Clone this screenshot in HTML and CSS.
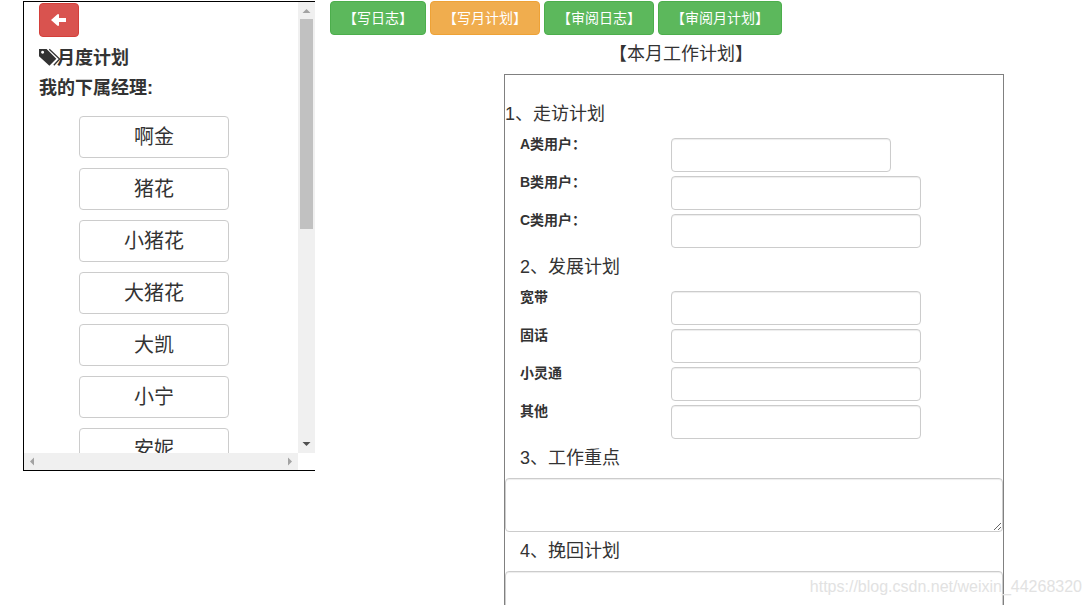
FILE: index.html
```html
<!DOCTYPE html>
<html lang="zh-CN">
<head>
<meta charset="utf-8">
<title>月度计划</title>
<link rel="stylesheet" href="styles.css">
</head>
<body>
<div class="page">
  <aside class="sidebar">
    <div class="sidebar-view">
      <button class="btn btn-danger" type="button" aria-label="返回">
        <svg width="14" height="14" viewBox="0 0 14 14"><path d="M-1 7 5.500 1.200H7V5.100h7v3.800H7v3.900H5.500z" fill="#fff"/></svg>
      </button>
      <h4 class="side-title">
        <svg class="tags" width="24" height="20" viewBox="0 0 24 20"><path fill="#333" fill-rule="evenodd" d="M0 1h7.600l9.700 9.700-6.900 7.100L0 8.200zM3.600 2.700a1.500 1.500 0 1 0 .01 0z"/><path d="M10.300 1.300 20.600 11l-5.800 6.300" fill="none" stroke="#333" stroke-width="1.300"/></svg><span>月度计划</span>
      </h4>
      <h4 class="side-title">我的下属经理:</h4>
      <div class="people">
        <button class="person" type="button">啊金</button>
        <button class="person" type="button">猪花</button>
        <button class="person" type="button">小猪花</button>
        <button class="person" type="button">大猪花</button>
        <button class="person" type="button">大凯</button>
        <button class="person" type="button">小宁</button>
        <button class="person" type="button">安妮</button>
      </div>
    </div>
    <div class="bar bar-y">
      <svg class="arrow" width="17" height="17" viewBox="0 0 17 17"><path d="M4.500 11h8L8.500 7z" fill="#a3a3a3"/></svg>
      <div class="track"><div class="thumb"></div></div>
      <svg class="arrow" width="17" height="17" viewBox="0 0 17 17"><path d="M4.500 6h8l-4 4z" fill="#505050"/></svg>
    </div>
    <div class="bar bar-x">
      <svg class="arrow" width="17" height="17" viewBox="0 0 17 17"><path d="M10 4.500v8l-4-4z" fill="#a3a3a3"/></svg>
      <svg class="arrow" width="17" height="17" viewBox="0 0 17 17"><path d="M7 4.500v8l4-4z" fill="#a3a3a3"/></svg>
    </div>
  </aside>

  <main class="main">
    <nav class="toolbar">
      <button class="btn btn-success" type="button">【写日志】</button>
      <button class="btn btn-warning" type="button">【写月计划】</button>
      <button class="btn btn-success" type="button">【审阅日志】</button>
      <button class="btn btn-success" type="button">【审阅月计划】</button>
    </nav>
    <h4 class="title">【本月工作计划】</h4>
    <form class="plan">
      <h4 class="heading heading-flush">1、走访计划</h4>
      <div class="row"><label for="a">A类用户：</label><input class="field field-short" id="a" type="text"></div>
      <div class="row"><label for="b">B类用户：</label><input class="field" id="b" type="text"></div>
      <div class="row"><label for="c">C类用户：</label><input class="field" id="c" type="text"></div>
      <h4 class="heading">2、发展计划</h4>
      <div class="row"><label for="d">宽带</label><input class="field" id="d" type="text"></div>
      <div class="row"><label for="e">固话</label><input class="field" id="e" type="text"></div>
      <div class="row"><label for="f">小灵通</label><input class="field" id="f" type="text"></div>
      <div class="row"><label for="g">其他</label><input class="field" id="g" type="text"></div>
      <h4 class="heading"><label for="focus">3、工作重点</label></h4>
      <textarea class="area" id="focus" rows="2"></textarea>
      <h4 class="heading"><label for="recover">4、挽回计划</label></h4>
      <textarea class="area" id="recover" rows="2"></textarea>
    </form>
  </main>
  <div class="watermark">https://blog.csdn.net/weixin_44268320</div>
</div>
</body>
</html>
```
FILE: styles.css
```css
* { box-sizing: border-box; }

body {
  margin: 0;
  background: #fff;
  color: #333;
  font: 14px/20px "Liberation Sans", "Noto Sans CJK SC", sans-serif;
}

button, input, textarea { font: inherit; color: inherit; }

h4 { margin: 0; font-size: 18px; line-height: 19px; font-weight: 400; }

.page {
  position: relative;
  display: flex;
  align-items: flex-start;
  height: 100vh;
  padding: 1px 0 0 23px;
  overflow: hidden;
}

/* Sidebar */
.sidebar {
  flex: 0 0 292px;
  display: grid;
  grid-template-columns: 1fr 17px;
  grid-template-rows: 451px 17px;
  border: 1px solid #000;
  border-right: 0;
}

.sidebar-view { overflow: hidden; padding: 1px 15px 0; }

.side-title {
  display: flex;
  align-items: center;
  height: 20px;
  margin-bottom: 10px;
  font-weight: 700;
}

.tags { flex: none; margin-right: -6px; }

.people {
  display: flex;
  flex-direction: column;
  gap: 10px;
  padding: 8px 0 0 40px;
}

.person {
  flex: none;
  width: 150px;
  height: 42px;
  padding: 0;
  border: 1px solid #ccc;
  border-radius: 4px;
  background: #fff;
  font-size: 20px;
  line-height: 40px;
}

.bar { display: flex; background: #f0f0f0; }
.bar-y { flex-direction: column; }
.bar-x { justify-content: space-between; }
.arrow { flex: none; }
.track { flex: 1; padding: 0 2px; }
.thumb { height: 210px; background: #c1c1c1; }

/* Buttons */
.btn {
  display: block;
  height: 34px;
  padding: 0 12px;
  border: 1px solid;
  border-radius: 4px;
  color: #fff;
  white-space: nowrap;
}

.btn svg { display: block; overflow: visible; }
.btn-danger { margin-bottom: 11px; background: #d9534f; border-color: #d43f3a; }
.btn-success { background: #5cb85c; border-color: #4cae4c; }
.btn-warning { background: #f0ad4e; border-color: #eea236; }

/* Main */
.main { flex: 1; min-width: 0; padding: 0 15px; }
.toolbar { display: flex; gap: 4px; }
.title { margin: 10px 44px 10px 0; text-align: center; }

.plan {
  width: 500px;
  margin-left: 174px;
  padding-top: 20px;
  border: 1px solid #808080;
}

.heading { padding: 10px 15px; }
.heading-flush { padding-left: 0; }

.row {
  display: grid;
  grid-template-columns: 151px 1fr;
  align-items: start;
  height: 38px;
  padding-left: 15px;
}

.row label { font-weight: 700; }

.field, .area {
  border: 1px solid #ccc;
  border-radius: 4px;
  background: #fff;
  padding: 6px 12px;
  box-shadow: inset 0 1px 1px rgba(0, 0, 0, .075);
}

.field { width: 250px; height: 34px; margin-top: 4px; }
.field-short { width: 220px; }
.area { display: block; width: 100%; height: 54px; }

.watermark {
  position: absolute;
  right: 9px;
  bottom: 8px;
  font-size: 16px;
  color: #e2e2e2;
  pointer-events: none;
}
```
